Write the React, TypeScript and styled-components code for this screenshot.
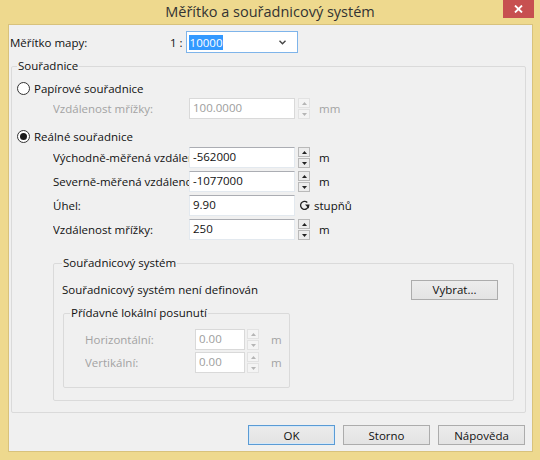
import styled, { createGlobalStyle } from 'styled-components'

const GlobalStyle = createGlobalStyle`
  html, body {
    margin: 0;
    padding: 0;
    background: #ffffff;
  }
  body {
    font-family: 'Segoe UI', 'Open Sans', 'Noto Sans', sans-serif;
    font-size: 11.5px;
    color: #111111;
  }
`

const Window = styled.div`
  width: 540px;
  height: 460px;
  background: #eed98e;
  display: flex;
  flex-direction: column;
  box-sizing: border-box;
`

const TitleBar = styled.div`
  height: 24px;
  display: grid;
  grid-template-columns: 1fr auto 1fr;
  align-items: start;
`

const Title = styled.div`
  grid-column: 2;
  font-size: 14.5px;
  line-height: 24px;
  color: #333333;
`

const CloseButton = styled.div`
  grid-column: 3;
  justify-self: end;
  margin-right: 6px;
  width: 31px;
  height: 18px;
  background: #c75050;
  display: flex;
  align-items: center;
  justify-content: center;
`

const Client = styled.div`
  flex: 1;
  margin: 0 7px 8px 8px;
  background: #f0f0f0;
  border: 1px solid #d8c27c;
  display: flex;
  flex-direction: column;
`

const TopRow = styled.div`
  display: flex;
  align-items: center;
  height: 22px;
  margin: 6px 0 0 1px;
`

const TopLabel = styled.span`
  width: 160px;
`

const Ratio = styled.span`
  margin-right: 3px;
`

const Combo = styled.div`
  box-sizing: border-box;
  width: 112px;
  height: 22px;
  border: 1px solid #7eb4ea;
  background: #ffffff;
  display: flex;
  align-items: center;
  justify-content: space-between;
  padding: 0 11px 0 2px;
`

const Selected = styled.span`
  background: #3399ff;
  color: #ffffff;
  line-height: 15px;
  padding: 0 1px;
`

const Group = styled.fieldset<{ $inset?: string; $pad?: string; $width?: number }>`
  margin: ${(p) => p.$inset || '0'};
  padding: ${(p) => p.$pad || '0'};
  width: ${(p) => (p.$width ? `${p.$width}px` : 'auto')};
  border: 1px solid #dadada;
  border-radius: 2px;
  min-width: 0;
`

const Legend = styled.legend`
  padding: 0 1px;
  line-height: 16px;
`

const RadioRow = styled.label<{ $top: number }>`
  display: flex;
  align-items: center;
  gap: 4px;
  height: 20px;
  margin-top: ${(p) => p.$top}px;
`

const Radio = styled.span<{ $checked?: boolean }>`
  width: 11px;
  height: 11px;
  border: 1px solid #333333;
  border-radius: 50%;
  background: #ffffff;
  display: flex;
  align-items: center;
  justify-content: center;
  &::after {
    content: '';
    width: 7px;
    height: 7px;
    border-radius: 50%;
    background: ${(p) => (p.$checked ? '#1a1a1a' : 'transparent')};
  }
`

const FieldRow = styled.div<{ $top: number; $indent: number; $labelWidth: number }>`
  display: grid;
  grid-template-columns: ${(p) => p.$labelWidth}px auto auto auto;
  justify-content: start;
  align-items: center;
  height: 21px;
  margin: ${(p) => p.$top}px 0 0 ${(p) => p.$indent}px;
`

const FieldLabel = styled.span<{ $disabled?: boolean }>`
  white-space: nowrap;
  overflow: hidden;
  color: ${(p) => (p.$disabled ? '#a3a3a3' : 'inherit')};
`

const Input = styled.div<{ $width: number; $disabled?: boolean }>`
  box-sizing: border-box;
  width: ${(p) => p.$width}px;
  height: 21px;
  background: #ffffff;
  border: 1px solid;
  border-color: ${(p) => (p.$disabled ? '#d9d9d9' : '#abadb3 #e3e9ef #e3e9ef #e3e9ef')};
  color: ${(p) => (p.$disabled ? '#9d9d9d' : 'inherit')};
  padding: 0 3px;
  line-height: 18px;
`

const Spinner = styled.div<{ $gap: number }>`
  display: flex;
  flex-direction: column;
  margin-left: ${(p) => p.$gap}px;
  height: 21px;
  gap: 1px;
`

const SpinHalf = styled.div<{ $disabled?: boolean }>`
  box-sizing: border-box;
  width: 12px;
  height: 10px;
  border: 1px solid ${(p) => (p.$disabled ? '#e2e2e2' : '#b9b9b9')};
  background: ${(p) => (p.$disabled ? '#f4f4f4' : '#ececec')};
  display: flex;
  align-items: center;
  justify-content: center;
`

const Unit = styled.span<{ $gap: number; $disabled?: boolean }>`
  margin-left: ${(p) => p.$gap}px;
  color: ${(p) => (p.$disabled ? '#a3a3a3' : 'inherit')};
`

const Rotate = styled.span`
  display: flex;
  align-items: center;
  gap: 4px;
  margin-left: 4px;
`

const SystemRow = styled.div`
  display: flex;
  align-items: center;
  justify-content: space-between;
  height: 21px;
  margin-top: 8px;
  padding-right: 15px;
`

const Button = styled.div<{ $default?: boolean; $width: number }>`
  box-sizing: border-box;
  width: ${(p) => p.$width}px;
  height: 20px;
  border: 1px solid ${(p) => (p.$default ? '#5a9bd5' : '#acacac')};
  background: linear-gradient(#ececec, #e3e3e3);
  box-shadow: ${(p) => (p.$default ? 'inset 0 0 0 1px #d5e8f8' : 'none')};
  display: flex;
  align-items: center;
  justify-content: center;
`

const ButtonBar = styled.div`
  display: flex;
  justify-content: flex-end;
  gap: 8px;
  margin: 12px 7px 0 0;
`

function Arrow({ up, disabled }: { up?: boolean; disabled?: boolean }) {
  return (
    <svg width="5" height="3" viewBox="0 0 5 3">
      <polygon
        points={up ? '0,3 5,3 2.5,0' : '0,0 5,0 2.5,3'}
        fill={disabled ? '#b5b5b5' : '#222'}
      />
    </svg>
  )
}

function Spin({ disabled, gap = 3 }: { disabled?: boolean; gap?: number }) {
  return (
    <Spinner $gap={gap}>
      <SpinHalf $disabled={disabled}>
        <Arrow up disabled={disabled} />
      </SpinHalf>
      <SpinHalf $disabled={disabled}>
        <Arrow disabled={disabled} />
      </SpinHalf>
    </Spinner>
  )
}

export default function App() {
  return (
    <>
      <GlobalStyle />
      <Window>
        <TitleBar>
          <Title>Měřítko a souřadnicový systém</Title>
          <CloseButton>
            <svg width="9" height="8" viewBox="0 0 9 8">
              <path d="M1 0.5 L8 7.5 M8 0.5 L1 7.5" stroke="#fff" strokeWidth="1.8" />
            </svg>
          </CloseButton>
        </TitleBar>
        <Client>
          <TopRow>
            <TopLabel>Měřítko mapy:</TopLabel>
            <Ratio>1 :</Ratio>
            <Combo>
              <Selected>10000</Selected>
              <svg width="7" height="5" viewBox="0 0 7 5">
                <polyline points="0.5,0.8 3.5,3.8 6.5,0.8" fill="none" stroke="#444" strokeWidth="1.4" />
              </svg>
            </Combo>
          </TopRow>

          <Group $inset="5px 6px 0 2px" $pad="0 0 11px 5px">
            <Legend>Souřadnice</Legend>
            <RadioRow $top={4}>
              <Radio />
              Papírové souřadnice
            </RadioRow>
            <FieldRow $top={0} $indent={36} $labelWidth={136}>
              <FieldLabel $disabled>Vzdálenost mřížky:</FieldLabel>
              <Input $width={106} $disabled>100.0000</Input>
              <Spin disabled />
              <Unit $gap={9} $disabled>mm</Unit>
            </FieldRow>

            <RadioRow $top={7}>
              <Radio $checked />
              Reálné souřadnice
            </RadioRow>
            <FieldRow $top={1} $indent={36} $labelWidth={136}>
              <FieldLabel>Východně-měřená vzdálenost</FieldLabel>
              <Input $width={106}>-562000</Input>
              <Spin />
              <Unit $gap={9}>m</Unit>
            </FieldRow>
            <FieldRow $top={3} $indent={36} $labelWidth={136}>
              <FieldLabel>Severně-měřená vzdálenost</FieldLabel>
              <Input $width={106}>-1077000</Input>
              <Spin />
              <Unit $gap={9}>m</Unit>
            </FieldRow>
            <FieldRow $top={3} $indent={36} $labelWidth={136}>
              <FieldLabel>Úhel:</FieldLabel>
              <Input $width={106}>9.90</Input>
              <Rotate>
                <svg width="11" height="11" viewBox="0 0 11 11">
                  <path d="M8.3 2.4 A4 4 0 1 0 9.5 6.2" fill="none" stroke="#222" strokeWidth="1.3" />
                  <polygon points="6,4.6 10.6,4.6 9.6,8.4" fill="#222" />
                </svg>
                stupňů
              </Rotate>
            </FieldRow>
            <FieldRow $top={3} $indent={36} $labelWidth={136}>
              <FieldLabel>Vzdálenost mřížky:</FieldLabel>
              <Input $width={106}>250</Input>
              <Spin />
              <Unit $gap={9}>m</Unit>
            </FieldRow>

            <Group $inset="15px 11px 0 36px" $pad="0 0 12px 8px">
              <Legend>Souřadnicový systém</Legend>
              <SystemRow>
                <span>Souřadnicový systém není definován</span>
                <Button $width={87}>Vybrat...</Button>
              </SystemRow>
              <Group $inset="5px 0 0 1px" $pad="0 0 14px 6px" $width={219}>
                <Legend>Přídavné lokální posunutí</Legend>
                <FieldRow $top={8} $indent={15} $labelWidth={110}>
                  <FieldLabel $disabled>Horizontální:</FieldLabel>
                  <Input $width={50} $disabled>0.00</Input>
                  <Spin disabled gap={2} />
                  <Unit $gap={12} $disabled>m</Unit>
                </FieldRow>
                <FieldRow $top={2} $indent={15} $labelWidth={110}>
                  <FieldLabel $disabled>Vertikální:</FieldLabel>
                  <Input $width={50} $disabled>0.00</Input>
                  <Spin disabled gap={2} />
                  <Unit $gap={12} $disabled>m</Unit>
                </FieldRow>
              </Group>
            </Group>
          </Group>

          <ButtonBar>
            <Button $default $width={87}>OK</Button>
            <Button $width={87}>Storno</Button>
            <Button $width={87}>Nápověda</Button>
          </ButtonBar>
        </Client>
      </Window>
    </>
  )
}
